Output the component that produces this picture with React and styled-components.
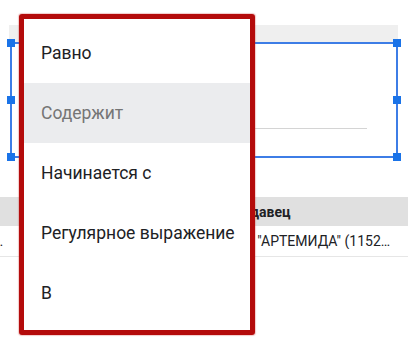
import React from "react";
import styled, { createGlobalStyle } from "styled-components";

const GlobalStyle = createGlobalStyle`
  html, body {
    margin: 0;
    padding: 0;
    background: #ffffff;
  }
  body {
    font-family: Roboto, "Noto Sans", Arial, sans-serif;
    color: #202124;
  }
`;

const Page = styled.div`
  position: relative;
  width: 408px;
  height: 349px;
  overflow: hidden;
  background: #ffffff;
`;

// Widget in the background (editor card with selection)
const CardBand = styled.div`
  margin: 25px 10px 0 9px;
  height: 17px;
  background: #efefef;
`;

const SelectionBox = styled.div`
  position: relative;
  box-sizing: border-box;
  margin-left: 10px;
  width: 388px;
  height: 116px;
  border: 2px solid #3d7de6;
  padding: 84px 29px 0 28px;
`;

const Underline = styled.div`
  height: 1px;
  background: #d4d4d4;
`;

const Handle = styled.span`
  position: absolute;
  width: 8px;
  height: 8px;
  background: #1a73e8;
  ${(p) => (p.$side === "left" ? "left: -5px;" : "right: -5px;")}
  ${(p) =>
    p.$pos === "top"
      ? "top: -5px;"
      : p.$pos === "bottom"
      ? "bottom: -5px;"
      : "top: calc(50% - 4px);"}
`;

// Table under the widget
const Table = styled.div`
  margin-top: 39px;
  font-size: 14px;
`;

const Row = styled.div`
  display: grid;
  grid-template-columns: 6px 203px 1fr;
  align-items: center;
  height: ${(p) => (p.$head ? "29px" : "30px")};
  background: ${(p) => (p.$head ? "#e0e0e0" : "#ffffff")};
  font-weight: ${(p) => (p.$head ? 700 : 400)};
  border-bottom: ${(p) => (p.$head ? "none" : "1px solid #e6e6e6")};
`;

const Cell = styled.div`
  padding: 0 0 0 16px;
  white-space: nowrap;
  overflow: hidden;
`;

const ClippedCell = styled.div`
  display: flex;
  justify-content: flex-end;
  overflow: hidden;
  padding-right: 3px;
  white-space: nowrap;
`;

// Dropdown menu over everything, outlined in red
const Menu = styled.ul`
  position: absolute;
  left: 19px;
  top: 14px;
  box-sizing: border-box;
  width: 236px;
  height: 321px;
  margin: 0;
  padding: 4px 0 0;
  list-style: none;
  background: #ffffff;
  border: 5px solid #b40b0b;
  border-radius: 3px;
  box-shadow: 0 0 1px 1px rgba(200, 40, 40, 0.25);
`;

const Item = styled.li`
  display: flex;
  align-items: center;
  height: 60px;
  padding: 0 12px 0 17px;
  font-size: 17.5px;
  color: ${(p) => (p.$active ? "#757575" : "#202124")};
  background: ${(p) => (p.$active ? "#ebecee" : "transparent")};
  white-space: nowrap;
`;

const options = ["Равно", "Содержит", "Начинается с", "Регулярное выражение", "В"];

export default function App() {
  return (
    <Page>
      <GlobalStyle />
      <CardBand />
      <SelectionBox>
        <Underline />
        {["top", "mid", "bottom"].map((pos) => (
          <React.Fragment key={pos}>
            <Handle $side="left" $pos={pos} />
            <Handle $side="right" $pos={pos} />
          </React.Fragment>
        ))}
      </SelectionBox>

      <Table>
        <Row $head>
          <ClippedCell />
          <Cell>Дата</Cell>
          <Cell>Продавец</Cell>
        </Row>
        <Row>
          <ClippedCell>01.01…</ClippedCell>
          <Cell>01.01.2020</Cell>
          <Cell>ООО "АРТЕМИДА" (1152…</Cell>
        </Row>
      </Table>

      <Menu>
        {options.map((o) => (
          <Item key={o} $active={o === "Содержит"}>
            {o}
          </Item>
        ))}
      </Menu>
    </Page>
  );
}
